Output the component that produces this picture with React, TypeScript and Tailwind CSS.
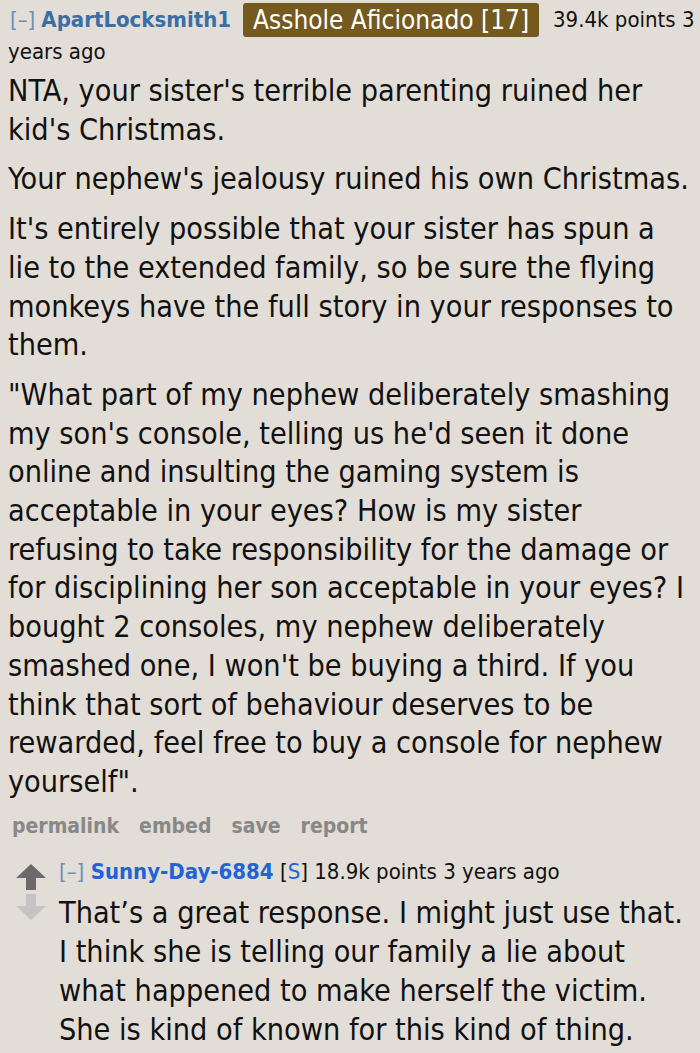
import React from "react";

const body = "font-['DejaVu_Sans_Condensed','DejaVu_Sans',sans-serif]";

const Arrow = ({ up, color }: { up?: boolean; color: string }) => (
  <svg width="32" height="28" viewBox="0 0 32 28" className={up ? "" : "rotate-180"}>
    <path d="M16 1 L31 15 L21 15 L21 27 L11 27 L11 15 L1 15 Z" fill={color} />
  </svg>
);

export default function App() {
  return (
    <div className={`min-h-[1053px] w-[700px] bg-[#e2ddd6] text-[#111] ${body}`}>
      <div className="px-[8px] pt-[4px]">
        {/* header */}
        <div className="text-[22px] leading-[32px]">
          <div className="flex h-[32px] items-center whitespace-nowrap">
            <span className="ml-[2px] text-[#6a8fbe]">[–]</span>
            <span className="ml-[6px] font-bold text-[#3a6ea5]">ApartLocksmith1</span>
            <span className="ml-[12px] h-[34px] shrink-0 rounded-[3px] bg-[#745a1f] px-[10px] text-[26px] leading-[34px] text-white">
              Asshole Aficionado [17]
            </span>
            <span className="ml-[14px]">39.4k points 3</span>
          </div>
          <div>years ago</div>
        </div>

        <div className="mt-[4px] space-y-[11px] text-[30.3px] leading-[38.7px]">
          <p>NTA, your sister's terrible parenting ruined her kid's Christmas.</p>
          <p>Your nephew's jealousy ruined his own Christmas.</p>
          <p>
            It's entirely possible that your sister has spun a lie to the extended family, so be
            sure the flying monkeys have the full story in your responses to them.
          </p>
          <p>
            "What part of my nephew deliberately smashing my son's console, telling us he'd seen it
            done online and insulting the gaming system is acceptable in your eyes? How is my
            sister refusing to take responsibility for the damage or for disciplining her son
            acceptable in your eyes? I bought 2 consoles, my nephew deliberately smashed one, I
            won't be buying a third. If you think that sort of behaviour deserves to be rewarded,
            feel free to buy a console for nephew yourself".
          </p>
        </div>

        <div className="mt-[9px] flex gap-[20px] pl-[4px] text-[21px] font-bold text-[#888]">
          <span>permalink</span>
          <span>embed</span>
          <span>save</span>
          <span>report</span>
        </div>
      </div>

      {/* child comment */}
      <div className="mt-[15px] flex">
        <div className="flex w-[59px] flex-col items-center gap-[2px] pt-[6px] pl-[2px]">
          <Arrow up color="#6a6a6a" />
          <Arrow color="#c4c4c4" />
        </div>
        <div className="flex-1 pr-[16px]">
          <div className="text-[22px] leading-[30px]">
            <span className="text-[#6a8fbe]">[–]</span>{" "}
            <span className="font-bold text-[#1f63d4]">Sunny-Day-6884</span>{" "}
            <span>
              [<span className="text-[#1f63d4]">S</span>]
            </span>{" "}
            <span>18.9k points 3 years ago</span>
          </div>
          <p className="mt-[6px] text-[30.3px] leading-[39px]">
            That’s a great response. I might just use that. I think she is telling our family a lie
            about what happened to make herself the victim. She is kind of known for this kind of
            thing.
          </p>
        </div>
      </div>
    </div>
  );
}
